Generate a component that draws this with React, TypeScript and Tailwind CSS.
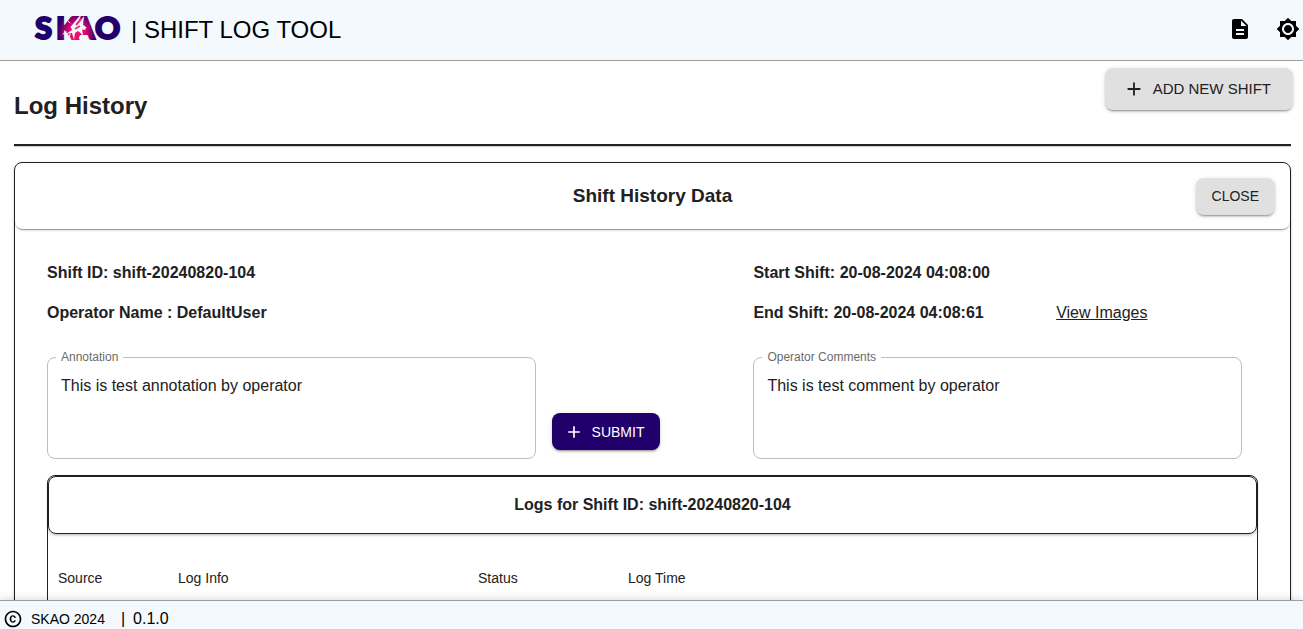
import type { ReactNode } from "react";
import { MdAdd, MdBrightness7, MdCopyright, MdDescription } from "react-icons/md";

const raised =
  "shadow-[0_3px_1px_-2px_rgba(0,0,0,0.2),0_2px_2px_0_rgba(0,0,0,0.14),0_1px_5px_0_rgba(0,0,0,0.12)]";

function Logo() {
  return (
    <svg width="92" height="48" viewBox="-2 -9 92 48" role="img" aria-label="SKAO">
      <defs>
        <radialGradient id="burst" gradientUnits="userSpaceOnUse" cx="43" cy="17" r="20">
          <stop offset="0" stopColor="#ff0a6c" />
          <stop offset="0.4" stopColor="#e8086a" />
          <stop offset="0.75" stopColor="#7b036b" />
          <stop offset="1" stopColor="#21006c" />
        </radialGradient>
      </defs>
      <text
        x="1 22 39 61"
        y="24"
        fill="url(#burst)"
        stroke="url(#burst)"
        strokeWidth="2"
        fontFamily="Lato, 'Open Sans', sans-serif"
        fontSize="31"
        fontWeight="900"
      >
        SKAO
      </text>
      <path
        d="M50 1l-1 9 4 3-5 1 1 6-5-4-3 2-1 7-2-7-6 1 6-4-1-4 4 1 3-3z"
        fill="#f4f9fd"
      />
      <path
        d="M47 4l-5 6M46 11l-5 3"
        stroke="#f0307f"
        strokeWidth="2"
        fill="none"
      />
      <path
        d="M36 8l-3-3M32 17l-3 2M36 19l-1 4M48 19l1 3"
        stroke="#f4f9fd"
        strokeWidth="1"
        strokeLinecap="round"
        fill="none"
      />
    </svg>
  );
}

function Field({
  id,
  label,
  value,
}: {
  id: string;
  label: string;
  value: string;
}) {
  return (
    <fieldset className="mr-4 min-w-0 rounded-lg border border-[#bdbdbd] px-2">
      <legend className="px-[5px] text-xs leading-[18px] text-[#6b6b6b]">
        <label htmlFor={id}>{label}</label>
      </legend>
      <textarea
        id={id}
        defaultValue={value}
        className="mt-2 block h-[84px] w-full resize-none bg-transparent px-[5px] text-base leading-6 outline-none"
      />
    </fieldset>
  );
}

function Bold({ className, children }: { className: string; children: ReactNode }) {
  return <p className={`text-base leading-6 font-bold ${className}`}>{children}</p>;
}

export default function App() {
  return (
    <div className="flex h-screen flex-col overflow-hidden bg-white font-['Liberation_Sans',Arial,sans-serif] text-[#212121]">
      <header className="flex h-[61px] shrink-0 items-center justify-between border-b border-[#9e9e9e] bg-[#f4f9fd] pr-[3px] pl-8 text-black">
        <div className="flex items-center gap-[7px]">
          <Logo />
          <span className="text-2xl">| SHIFT LOG TOOL</span>
        </div>
        <div className="flex items-center gap-6 pb-[2px]">
          <button type="button" aria-label="Documentation">
            <MdDescription size={24} />
          </button>
          <button type="button" aria-label="Toggle theme">
            <MdBrightness7 size={24} />
          </button>
        </div>
      </header>

      <main className="min-h-0 flex-1 overflow-hidden pr-3 pl-[14px]">
        <div className="flex h-[83px] items-start justify-between pt-[7px]">
          <h1 className="pt-5 text-2xl leading-9 font-bold">Log History</h1>
          <button
            type="button"
            className={`-mr-[2px] flex h-[42px] items-center gap-2 rounded-lg bg-[#e0e0e0] pr-[22px] pl-[18px] text-[15px] ${raised}`}
          >
            <MdAdd size={22} />
            ADD NEW SHIFT
          </button>
        </div>
        <hr className="border-t-2 border-[#212121] shadow-[0_1px_1px_rgba(0,0,0,0.2)]" />

        <section className="mt-4 rounded-lg border border-[#212121] shadow-[0_1px_3px_rgba(0,0,0,0.2)]">
          <div className="grid h-[67px] grid-cols-[1fr_auto_1fr] items-center rounded-lg border-b border-[#9e9e9e] pr-[15px] shadow-[0_1px_2px_rgba(0,0,0,0.12)]">
            <h2 className="col-start-2 pl-[15px] text-[19px] font-bold">Shift History Data</h2>
            <button
              type="button"
              className={`h-[37px] justify-self-end rounded-lg bg-[#e0e0e0] px-4 text-sm ${raised}`}
            >
              CLOSE
            </button>
          </div>

          <div className="px-8 pt-[31px]">
            <div className="grid grid-cols-12 gap-y-4">
              <Bold className="col-span-7">Shift ID: shift-20240820-104</Bold>
              <Bold className="col-span-5">Start Shift: 20-08-2024 04:08:00</Bold>
              <Bold className="col-span-7">Operator Name : DefaultUser</Bold>
              <Bold className="col-span-3">End Shift: 20-08-2024 04:08:61</Bold>
              <a href="#images" className="col-span-2 text-base leading-6 underline">
                View Images
              </a>
            </div>

            <form className="mt-[23px] grid grid-cols-12" onSubmit={(e) => e.preventDefault()}>
              <div className="col-span-5">
                <Field id="annotation" label="Annotation" value="This is test annotation by operator" />
              </div>
              <div className="col-span-2 flex items-end pb-[9px]">
                <button
                  type="submit"
                  className={`flex h-[37px] items-center gap-2 rounded-lg bg-[#21006c] pr-4 pl-3 text-sm text-white ${raised}`}
                >
                  <MdAdd size={20} />
                  SUBMIT
                </button>
              </div>
              <div className="col-span-5">
                <Field id="comments" label="Operator Comments" value="This is test comment by operator" />
              </div>
            </form>

            <div className="mt-4 h-80 rounded-lg border border-[#212121]">
              <h3 className="rounded-lg border border-[#212121] text-center text-base leading-[56px] font-bold shadow-[0_1px_3px_rgba(0,0,0,0.3)]">
                Logs for Shift ID: shift-20240820-104
              </h3>
              <table className="mt-4 table-fixed text-left text-sm">
                <thead>
                  <tr className="h-14">
                    <th scope="col" className="w-[120px] px-[10px] font-normal">Source</th>
                    <th scope="col" className="w-[300px] px-[10px] font-normal">Log Info</th>
                    <th scope="col" className="w-[150px] px-[10px] font-normal">Status</th>
                    <th scope="col" className="w-[200px] px-[10px] font-normal">Log Time</th>
                  </tr>
                </thead>
              </table>
            </div>
          </div>
        </section>
      </main>

      <footer className="relative flex h-[29px] shrink-0 items-center border-t border-[#9e9e9e] bg-[#f4f9fd] pt-2 pl-[3px] text-black shadow-[0_-1px_8px_rgba(0,0,0,0.15)]">
        <MdCopyright size={20} />
        <span className="ml-2 text-sm">SKAO 2024</span>
        <span className="ml-4">|</span>
        <span className="ml-2">0.1.0</span>
      </footer>
    </div>
  );
}
